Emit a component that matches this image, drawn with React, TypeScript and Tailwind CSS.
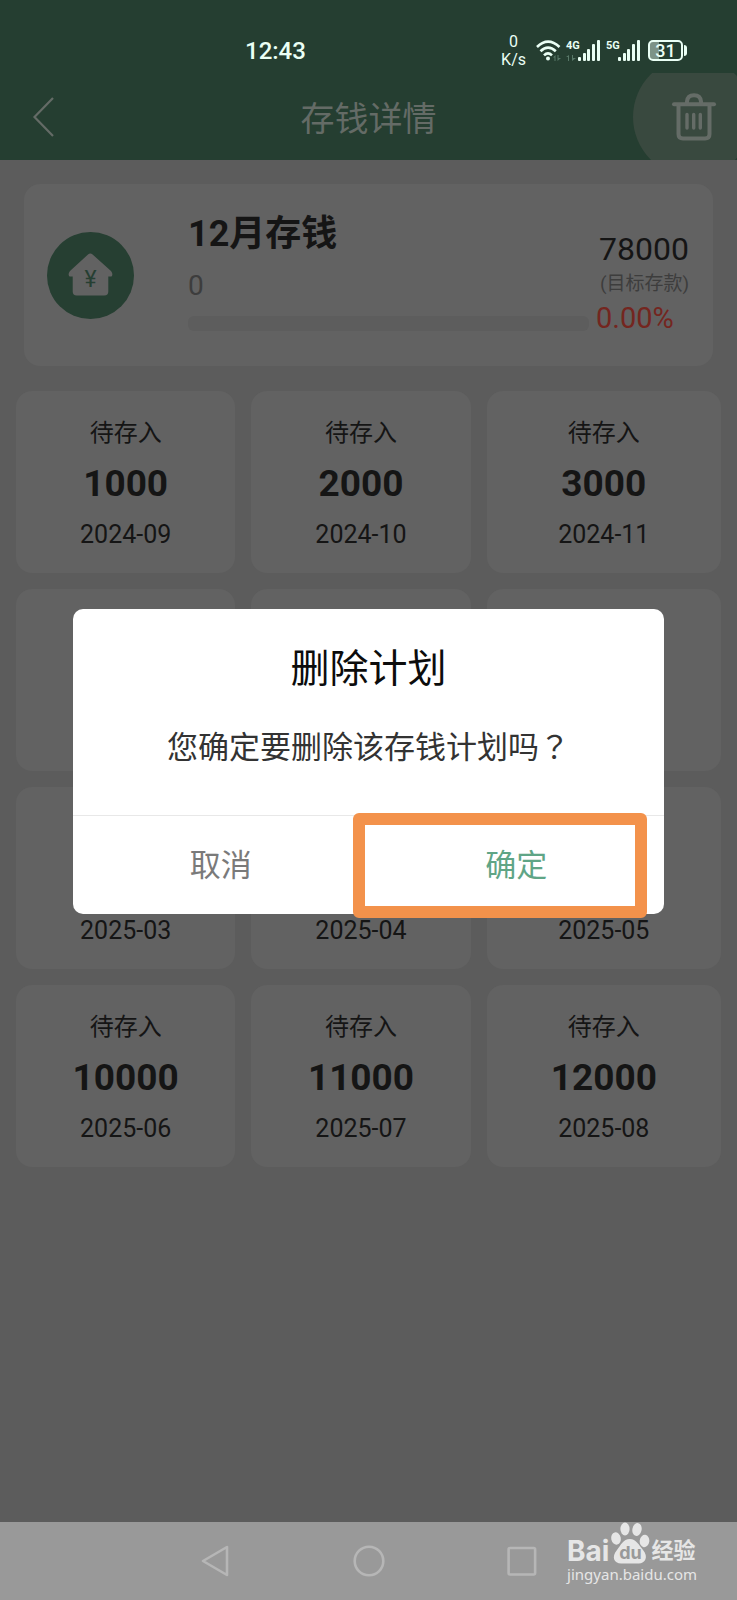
import React, { useState } from "react";

type Deposit = {
  label?: string;
  amount?: number;
  month?: string;
};

const deposits: Deposit[] = [
  { label: "待存入", amount: 1000, month: "2024-09" },
  { label: "待存入", amount: 2000, month: "2024-10" },
  { label: "待存入", amount: 3000, month: "2024-11" },
  {},
  {},
  {},
  { month: "2025-03" },
  { month: "2025-04" },
  { month: "2025-05" },
  { label: "待存入", amount: 10000, month: "2025-06" },
  { label: "待存入", amount: 11000, month: "2025-07" },
  { label: "待存入", amount: 12000, month: "2025-08" },
];

function Signal({ label, data }: { label: string; data?: boolean }) {
  return (
    <div className="flex">
      <div className="w-3">
        <div className="text-[11px] leading-[11px] font-bold">{label}</div>
        {data && (
          <svg className="mt-1 h-[6px] w-[10px] text-[#587868]" viewBox="0 0 10 6" fill="currentColor">
            <path d="M2 6V2H0L3 0v6zM6 0v6l4-3H7V0z" />
          </svg>
        )}
      </div>
      <svg className="h-[21px] w-[22px]" viewBox="0 0 22 21" fill="currentColor">
        <rect x="0" y="17" width="3" height="4" rx="1" />
        <rect x="5" y="13" width="3" height="8" rx="1" />
        <rect x="9" y="9" width="3" height="12" rx="1" />
        <rect x="14" y="4" width="3" height="17" rx="1" />
        <rect x="19" y="0" width="3" height="21" rx="1" />
      </svg>
    </div>
  );
}

function StatusBar() {
  return (
    <div className="flex h-[73px] items-center justify-between pt-7 pr-[50px] pl-[245px] text-[#eafff5]">
      <div className="text-2xl font-medium">12:43</div>
      <div className="flex items-center">
        <div className="mr-[10px] text-center text-base leading-[18px]">
          <div>0</div>
          <div>K/s</div>
        </div>
        <svg className="mr-[5px] h-[21px] w-[25px]" viewBox="0 0 25 21" fill="none" stroke="currentColor" strokeWidth="2.6">
          <path d="M1 7Q12 -3.600 23.500 7" />
          <path d="M4.500 11.300Q12 4 19.800 11.300" />
          <path d="M8 15.400Q12 11.500 16 15.400" />
          <circle cx="12" cy="18.500" r="2" fill="currentColor" stroke="none" />
          <path d="M18.500 21V17.500H17L19.500 15V21zM21.500 15V21L25 18H22.500V15z" fill="#587868" stroke="none" />
        </svg>
        <Signal label="4G" data />
        <div className="w-[6px]" />
        <Signal label="5G" />
        <div className="ml-2 flex h-[21px] w-[35px] items-center justify-center rounded-[5px] border-2 border-current bg-linear-to-r from-[#7c9387] from-30% to-transparent to-30% text-lg leading-none font-medium">
          31
        </div>
        <div className="ml-px h-[11px] w-[3px] rounded-r-sm bg-current" />
      </div>
    </div>
  );
}

function NavBar({ onDelete }: { onDelete: () => void }) {
  return (
    <div className="flex h-[87px] items-center justify-between text-[#646b66]">
      <button className="flex h-full w-[104px] items-center pl-8" aria-label="返回">
        <svg className="h-10 w-6" viewBox="0 0 24 40" fill="none" stroke="currentColor" strokeWidth="2.2">
          <path d="M21 1L2.500 20L21 39" />
        </svg>
      </button>
      <h1 className="pt-1 text-[34px] leading-none">存钱详情</h1>
      <button className="h-full w-[104px] overflow-hidden" aria-label="删除" onClick={onDelete}>
        <svg className="h-[87px] w-[104px]" viewBox="0 0 104 87" fill="none">
          <circle cx="60" cy="44" r="60" fill="#39493f" />
          <g stroke="#656c67" strokeWidth="4" strokeLinecap="round" strokeLinejoin="round">
            <path d="M41 31.200H81" />
            <path d="M45.500 32V61Q45.500 65.500 50 65.500H72Q76.500 65.500 76.500 61V32" />
            <path d="M54 30.500V28.500Q54.500 22.200 61 22.200Q67.500 22.200 68 28.500V30.500" />
            <path d="M54 41.500V55M60.700 41.500V55M67.300 41.500V55" strokeWidth="3.4" />
          </g>
        </svg>
      </button>
    </div>
  );
}

function PlanCard() {
  return (
    <section className="mx-6 mt-6 flex h-[182px] rounded-2xl bg-[#626262] pr-6 pl-[23px]">
      <svg className="h-[87px] w-[87px] shrink-0 self-center" viewBox="0 0 87 87">
        <circle cx="43.5" cy="43.5" r="43.5" fill="#263f32" />
        <path
          d="M41 22.500Q43.300 20.500 45.600 22.500L64 39Q66.500 42 64.500 44.500H61.300V59.500Q61.300 63.500 57.300 63.500H29.700Q25.700 63.500 25.700 59.500V44.500H22.500Q20.500 42 23 39z"
          fill="#626262"
        />
        <text x="43.5" y="55" textAnchor="middle" fontSize="23" fontWeight="400" fill="#263f32">
          ¥
        </text>
      </svg>
      <div className="ml-[54px] flex-1 pt-7">
        <h2 className="text-[36px] leading-[44px] font-bold text-[#151515]">12月存钱</h2>
        <div className="mt-[14px] text-[28px] leading-8 text-[#3d3d3d]">0</div>
        <div className="mt-[14px] h-[15px] rounded-md bg-[#5d5d5d]" />
      </div>
      <div className="ml-[7px] w-[93px] pt-[47px] whitespace-nowrap">
        <div className="text-right text-[32px] leading-9 text-[#151515]">78000</div>
        <div className="pt-px text-right text-[19px] leading-8 text-[#3d3d3d]">(目标存款)</div>
        <div className="text-[29px] leading-9 text-[#74261f]">0.00%</div>
      </div>
    </section>
  );
}

function DeleteDialog({ onClose }: { onClose: () => void }) {
  return (
    <div className="absolute inset-0 flex items-center px-[73px]">
      <div role="dialog" aria-label="删除计划" className="flex-1 rounded-[10px] bg-white text-center">
        <h2 className="pt-8 text-[39px] leading-[56px] text-[#0c0c0c]">删除计划</h2>
        <p className="mt-[26px] h-11 text-[31px] leading-[44px] whitespace-nowrap text-[#333333]">
          您确定要删除该存钱计划吗<span className="font-['Noto_Sans_CJK_TC']">？</span>
        </p>
        <div className="mt-12 flex h-[99px] border-t border-[#e8e8e8] text-[31px]">
          <button className="flex-1 pt-1 text-[#7a7a7a]" onClick={onClose}>
            取消
          </button>
          <button className="relative flex-1 pt-1 text-[#5fa586]" onClick={onClose}>
            确定
            <span className="pointer-events-none absolute -top-[3px] right-[17px] -bottom-1 -left-4 rounded-md border-12 border-[#f3924b]" />
          </button>
        </div>
      </div>
    </div>
  );
}

function SystemNav() {
  return (
    <footer className="flex h-[78px] items-center justify-center gap-[121px] bg-[#999999] text-[#b6b6b6]">
      <button aria-label="后退">
        <svg className="h-8 w-8" viewBox="0 0 32 32" fill="none" stroke="currentColor" strokeWidth="2.6" strokeLinejoin="round">
          <path d="M27 2V30L3 16z" />
        </svg>
      </button>
      <button aria-label="主页">
        <svg className="h-8 w-8" viewBox="0 0 32 32" fill="none" stroke="currentColor" strokeWidth="2.600">
          <circle cx="16" cy="16" r="14.300" />
        </svg>
      </button>
      <button aria-label="最近任务">
        <svg className="h-8 w-8" viewBox="0 0 32 32" fill="none" stroke="currentColor" strokeWidth="2.600">
          <rect x="2.600" y="3" width="26.500" height="26.500" rx="1.500" />
        </svg>
      </button>
    </footer>
  );
}

function Watermark() {
  return (
    <div className="pointer-events-none absolute right-10 bottom-4 text-[#e6e6e6]">
      <div className="flex items-end gap-px">
        <span className="font-['Inter'] text-[28px] leading-[26px] font-bold">Bai</span>
        <span className="relative h-[42px] w-10">
          <svg className="h-[42px] w-10" viewBox="0 0 40 42" fill="currentColor">
            <ellipse cx="6" cy="16.500" rx="4.800" ry="6.200" transform="rotate(-12 6 16.500)" />
            <ellipse cx="15" cy="7" rx="4.600" ry="6.500" />
            <ellipse cx="27" cy="7.500" rx="4.600" ry="6.500" transform="rotate(12 27 7.500)" />
            <ellipse cx="34.500" cy="19" rx="4.800" ry="6.200" transform="rotate(8 34.500 19)" />
            <path d="M20 17C26 17 29 23 33 28C39 35 35 42 28 41.500H12C4 42 1 35 7 28C11 23 13 17 20 17z" />
          </svg>
          <span className="absolute inset-x-0 bottom-0 text-center font-['Inter'] text-lg leading-[22px] font-bold text-[#999999]">
            du
          </span>
        </span>
        <span className="text-[22px] leading-[26px] font-bold">经验</span>
      </div>
      <div className="font-['Noto_Sans'] text-[15px] leading-5">jingyan.baidu.com</div>
    </div>
  );
}

export default function App() {
  const [dialogOpen, setDialogOpen] = useState(true);

  return (
    <div className="relative flex min-h-screen flex-col font-['Roboto','Noto_Sans_CJK_SC',sans-serif]">
      <div className="relative flex flex-1 flex-col bg-[#5c5c5c]">
        <header className="bg-[#253e31]">
          <StatusBar />
          <NavBar onDelete={() => setDialogOpen(true)} />
        </header>
        <main>
          <PlanCard />
          <ul className="mt-[25px] grid grid-cols-[219fr_219fr_234fr] gap-4 px-4">
            {deposits.map((d, index) => (
              <li key={index} className="flex flex-col items-center gap-[13px] rounded-2xl bg-[#626262] pt-[26px] pb-[22px] text-[#151515]">
                <div className="h-8 text-2xl leading-8">{d.label}</div>
                <div className="h-11 text-[37px] leading-[44px] font-bold">{d.amount}</div>
                <div className="h-8 text-[25px] leading-8">{d.month}</div>
              </li>
            ))}
          </ul>
        </main>
        {dialogOpen && <DeleteDialog onClose={() => setDialogOpen(false)} />}
      </div>
      <SystemNav />
      <Watermark />
    </div>
  );
}
